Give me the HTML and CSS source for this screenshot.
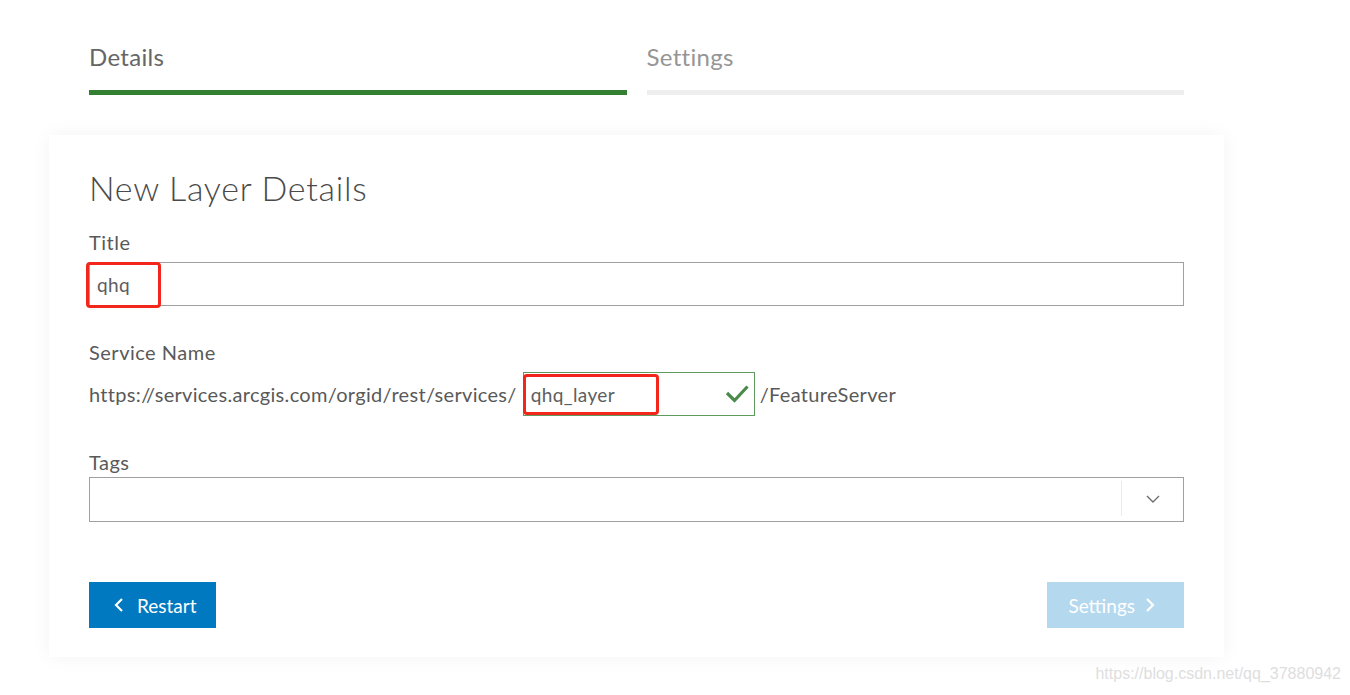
FILE: index.html
```html
<!DOCTYPE html>
<html lang="en">
<head>
<meta charset="utf-8">
<title>New Layer Details</title>
<link rel="stylesheet" href="styles.css">
</head>
<body>
<div class="page">
  <nav class="steps">
    <div class="step step-active">
      <div class="step-label">Details</div>
      <div class="step-bar"></div>
    </div>
    <div class="step">
      <div class="step-label">Settings</div>
      <div class="step-bar"></div>
    </div>
  </nav>

  <section class="card">
    <h1 class="card-title">New Layer Details</h1>

    <label class="field-label label-title">Title</label>
    <div class="text-input">
      <span class="input-value">qhq</span>
      <span class="mark mark-title"></span>
    </div>

    <label class="field-label label-service">Service Name</label>
    <div class="service-row">
      <span class="url-part">https://services.arcgis.com/orgid/rest/services/</span>
      <div class="service-input">
        <span class="input-value">qhq_layer</span>
        <svg class="check" width="24" height="20" viewBox="0 0 24 20"><path d="M2 9 L9.5 16.5 L22.5 2.5" fill="none" stroke="#4c8a4c" stroke-width="3.2"/></svg>
        <span class="mark mark-service"></span>
      </div>
      <span class="url-part url-suffix">/FeatureServer</span>
    </div>

    <label class="field-label label-tags">Tags</label>
    <div class="select-input">
      <div class="select-value"></div>
      <div class="select-toggle">
        <svg width="14" height="8" viewBox="0 0 14 8"><path d="M1 1 L7 7 L13 1" fill="none" stroke="#6e6e6e" stroke-width="1.4"/></svg>
      </div>
    </div>

    <div class="actions">
      <button class="btn btn-primary">
        <svg width="10" height="14" viewBox="0 0 10 14"><path d="M8 1 L2 7 L8 13" fill="none" stroke="#ffffff" stroke-width="2.2"/></svg>
        <span>Restart</span>
      </button>
      <button class="btn btn-disabled">
        <span>Settings</span>
        <svg width="10" height="14" viewBox="0 0 10 14"><path d="M2 1 L8 7 L2 13" fill="none" stroke="#ffffff" stroke-width="2.2"/></svg>
      </button>
    </div>
  </section>

  <div class="watermark">https://blog.csdn.net/qq_37880942</div>
</div>
</body>
</html>
```

FILE: styles.css
```css
* { box-sizing: border-box; }

html, body {
  margin: 0;
  padding: 0;
  background: #ffffff;
}

body {
  font-family: Lato, "Open Sans", "Liberation Sans", sans-serif;
  color: #595959;
  height: 695px;
  overflow: hidden;
}

.page {
  position: relative;
  width: 1175px;
  margin-left: 49px;
  height: 695px;
}

.steps {
  display: flex;
  gap: 20px;
  padding: 42px 40px 0 40px;
}

.step {
  flex: 1;
}

.step-label {
  font-size: 24px;
  line-height: 30px;
  letter-spacing: 0.3px;
  color: #969696;
  font-weight: 400;
}

.step-active .step-label {
  color: #666666;
}

.step-bar {
  margin-top: 18px;
  height: 5px;
  background: #eeeeee;
}

.step-active .step-bar {
  background: #338033;
}

.card {
  margin-top: 40px;
  background: #ffffff;
  box-shadow: 0 0 18px rgba(0, 0, 0, 0.05);
  padding: 33px 40px 29px 40px;
  display: flex;
  flex-direction: column;
}

.card-title {
  margin: 0;
  font-size: 34px;
  line-height: 40px;
  letter-spacing: 0.7px;
  font-weight: 300;
  color: #4a4a4a;
}

.field-label {
  display: block;
  font-size: 20px;
  line-height: 24px;
  letter-spacing: 0.5px;
  color: #595959;
}

.label-title { margin-top: 22px; }
.label-service { margin-top: 34px; }
.label-tags { margin-top: 34px; }

.text-input {
  position: relative;
  margin-top: 8px;
  height: 44px;
  border: 1px solid #a0a0a0;
  display: flex;
  align-items: center;
  padding: 0 7px;
}

.input-value {
  font-size: 19px;
  letter-spacing: 0.4px;
  color: #5e5e5e;
}

.service-row {
  margin-top: 8px;
  display: flex;
  align-items: center;
  height: 44px;
}

.url-part {
  font-size: 20px;
  letter-spacing: 0.32px;
  color: #595959;
}

.service-input {
  position: relative;
  margin-left: 6px;
  width: 232px;
  height: 44px;
  border: 1px solid #5f9a5f;
  display: flex;
  align-items: center;
  justify-content: space-between;
  padding: 0 5px 0 7px;
}

.url-suffix {
  margin-left: 5px;
}

.mark {
  position: absolute;
  border: 3px solid #f2261b;
  border-radius: 4px;
}

.mark-title {
  left: -4px;
  top: -1px;
  width: 75px;
  height: 46px;
}

.mark-service {
  left: -1px;
  top: 1px;
  width: 136px;
  height: 41px;
}

.select-input {
  margin-top: 3px;
  height: 45px;
  border: 1px solid #a0a0a0;
  display: flex;
}

.select-value {
  flex: 1;
}

.select-toggle {
  width: 62px;
  margin: 3px 0 5px 0;
  border-left: 1px solid #ebebeb;
  display: flex;
  align-items: center;
  justify-content: center;
}

.actions {
  margin-top: 60px;
  display: flex;
  justify-content: space-between;
}

.btn {
  height: 46px;
  border: none;
  display: flex;
  align-items: center;
  gap: 13px;
  font-family: Lato, "Open Sans", "Liberation Sans", sans-serif;
  font-size: 19px;
  color: #ffffff;
  cursor: pointer;
}

.btn-primary {
  background: #0079c1;
  padding: 0 19px 0 25px;
}

.btn-disabled {
  background: #b4d8ee;
  padding: 0 29px 0 21px;
  gap: 10px;
}

.watermark {
  position: absolute;
  right: -117px;
  top: 665px;
  font-family: "Liberation Sans", Arial, sans-serif;
  font-size: 16px;
  color: #dedede;
  white-space: nowrap;
}
```
